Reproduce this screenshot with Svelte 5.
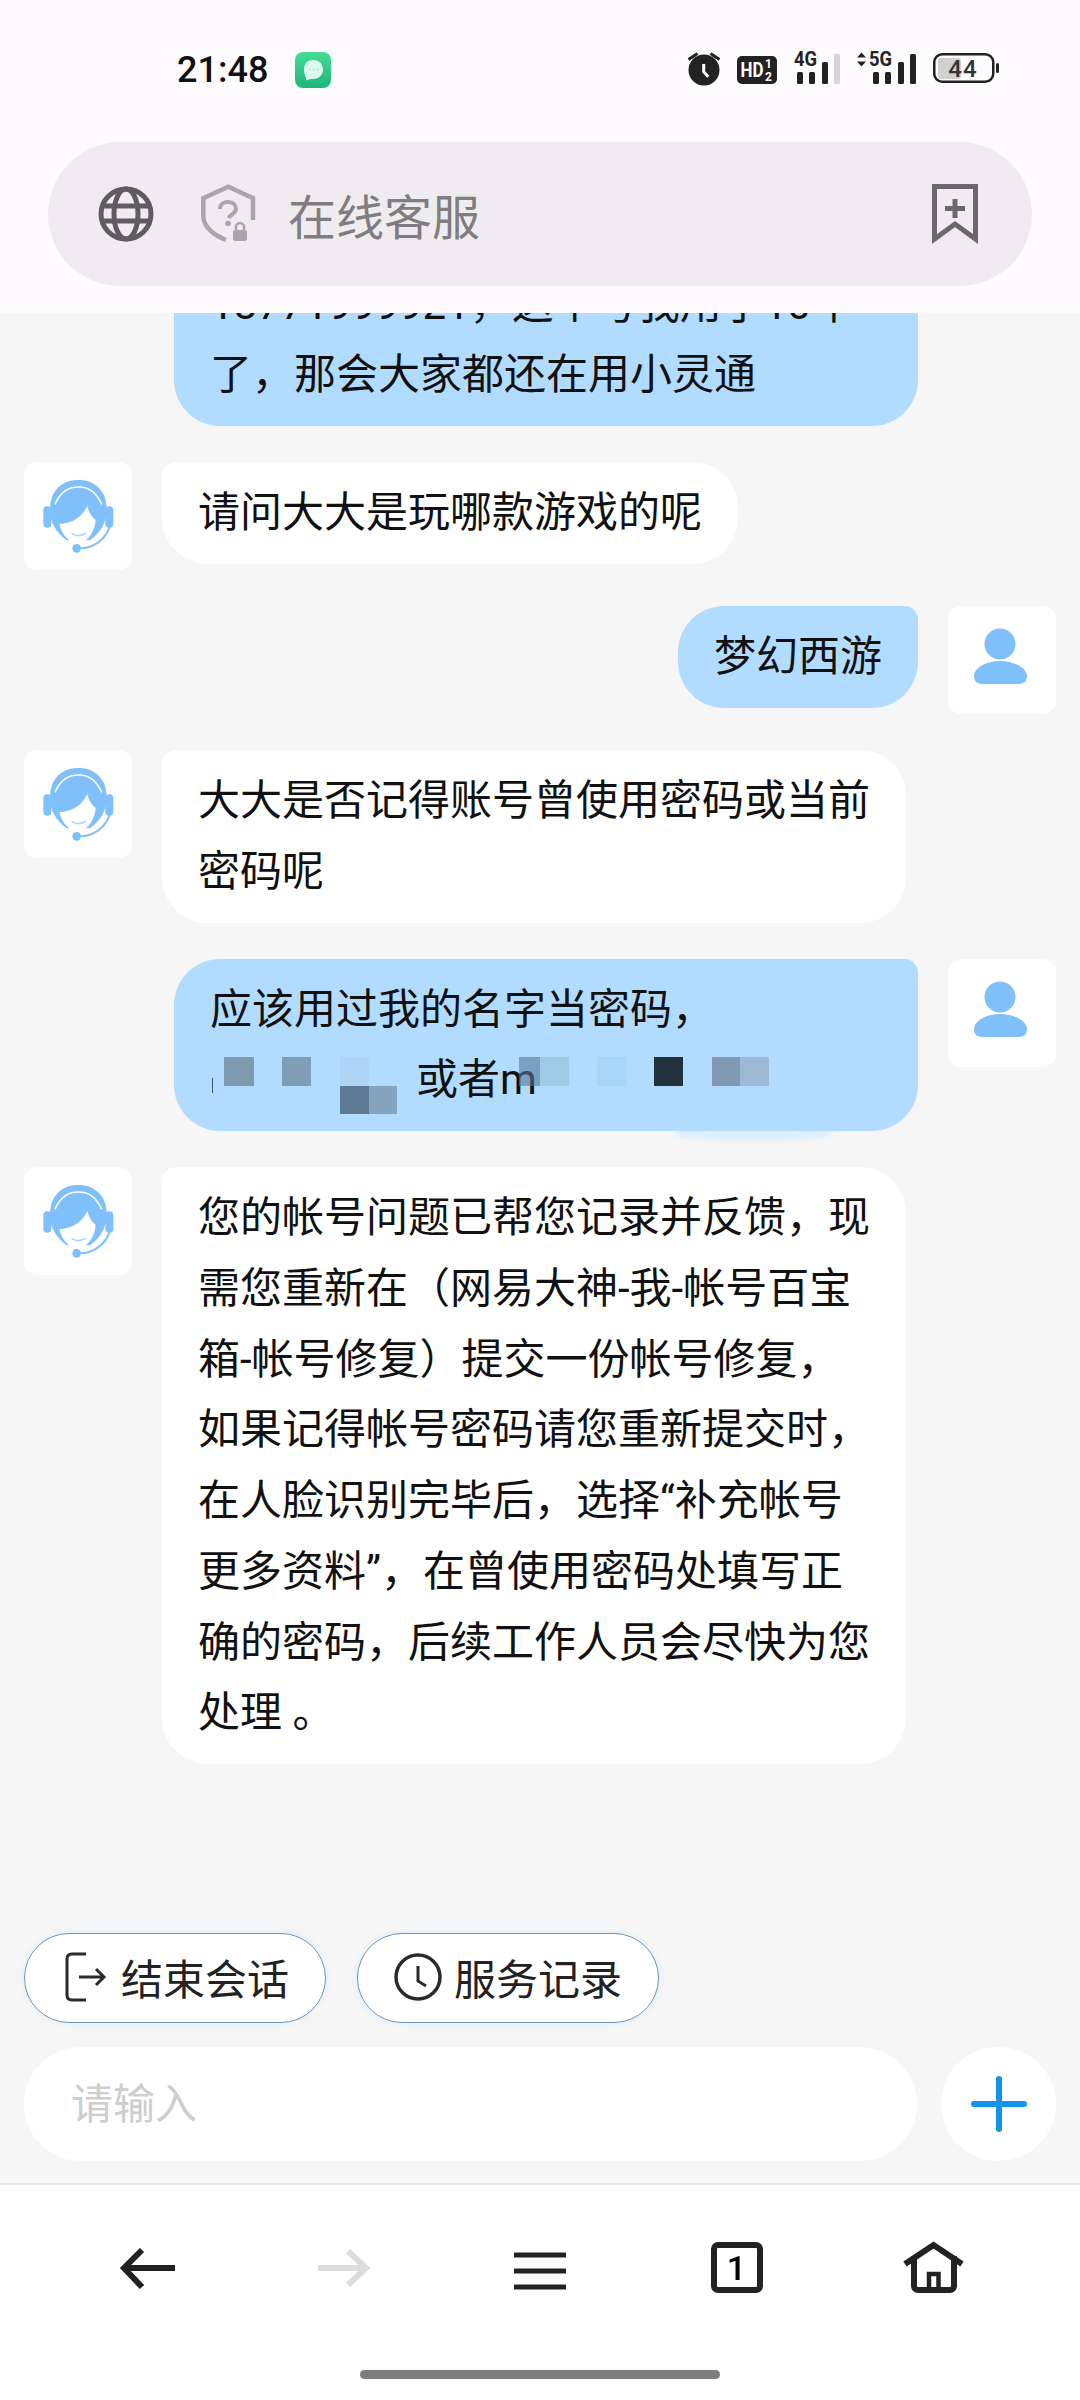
<script>
  const bars = [
    { x: 0, top: 22 },
    { x: 12, top: 22 },
    { x: 25, top: 12 },
    { x: 37, top: 4 }
  ];

  const messages = [
    {
      from: 'me',
      wide: true,
      scrolled: true,
      text: '18771999921，这个号我用了10年了，那会大家都还在用小灵通'
    },
    { from: 'agent', text: '请问大大是玩哪款游戏的呢' },
    { from: 'me', text: '梦幻西游' },
    { from: 'agent', wide: true, text: '大大是否记得账号曾使用密码或当前密码呢' },
    {
      from: 'me',
      wide: true,
      text: '应该用过我的名字当密码，',
      tail: '或者m',
      masks: [
        { x: 38, y: 119, w: 1, h: 15, c: '#44586a' },
        { x: 50, y: 98, w: 30, h: 29, c: '#7e9ab1' },
        { x: 108, y: 98, w: 29, h: 29, c: '#7f9db3' },
        { x: 166, y: 98, w: 29, h: 29, c: '#aed5f6' },
        { x: 166, y: 127, w: 29, h: 28, c: '#5f7a93' },
        { x: 195, y: 127, w: 28, h: 28, c: '#86a4bd' },
        { x: 345, y: 98, w: 21, h: 29, c: 'rgba(84, 120, 146, 0.6)' },
        { x: 366, y: 98, w: 29, h: 29, c: '#a0cbe6' },
        { x: 423, y: 98, w: 29, h: 29, c: '#a8d6f8' },
        { x: 480, y: 98, w: 29, h: 29, c: '#22313b' },
        { x: 538, y: 98, w: 28, h: 29, c: '#8299b3' },
        { x: 566, y: 98, w: 29, h: 29, c: '#9cbad6' }
      ],
      smudge: true
    },
    {
      from: 'agent',
      wide: true,
      text: '您的帐号问题已帮您记录并反馈，现需您重新在（网易大神-我-帐号百宝箱-帐号修复）提交一份帐号修复，如果记得帐号密码请您重新提交时，在人脸识别完毕后，选择“补充帐号更多资料”，在曾使用密码处填写正确的密码，后续工作人员会尽快为您处理 。'
    }
  ];
</script>

{#snippet signal(lastColor)}
  {#each bars as bar, i}
    <rect
      x={bar.x}
      y={bar.top}
      width="6"
      height={34 - bar.top}
      rx="1.5"
      fill={i === 3 ? lastColor : '#222'}
    />
  {/each}
{/snippet}

{#snippet agentAvatar()}
  <div class="avatar">
    <svg viewBox="0 0 108 108" width="108" height="108">
      <g transform="translate(6 7) scale(.3333)" fill="#7fbffa">
        <path d="M60 122C60 65 95 33 145 33C195 33 230 65 230 122C230 160 212 190 180 214H110C78 190 60 160 60 122Z" />
        <rect x="40" y="112" width="24" height="64" rx="12" />
        <rect x="226" y="112" width="24" height="64" rx="12" />
        <path d="M75 106C90 70 115 54 145 54C175 54 200 70 215 106" fill="none" stroke="#fff" stroke-width="5" />
        <path d="M88 165C110 165 152 155 172 110C176 132 188 146 197 152C196 185 172 222 145 222C115 222 95 195 88 165Z" fill="#fff" />
        <path d="M125 193Q145 207 167 193" fill="none" stroke="#a6d4fc" stroke-width="5" />
        <path d="M150 238C185 238 225 215 238 175" fill="none" stroke="#7fbffa" stroke-width="6" />
        <circle cx="140" cy="238" r="13" />
      </g>
    </svg>
  </div>
{/snippet}

{#snippet userAvatar()}
  <div class="avatar">
    <svg viewBox="0 0 108 108" width="108" height="108" fill="#7fbffa">
      <circle cx="52" cy="38" r="15.5" />
      <path d="M26 70C26 62 38 55 52 55C66 55 79 62 79 70C79 76 75 78 70 78H35C30 78 26 76 26 70Z" />
    </svg>
  </div>
{/snippet}

<div class="page">
  <header class="top">
    <div class="status">
      <span class="time">21:48</span>
      <svg class="notif" viewBox="0 0 36 36" width="36" height="36">
        <defs>
          <linearGradient id="msg-green" x1="0" y1="0" x2="0" y2="1">
            <stop offset="0" stop-color="#45dd94" />
            <stop offset="1" stop-color="#1fb57c" />
          </linearGradient>
        </defs>
        <rect width="36" height="36" rx="8" fill="url(#msg-green)" />
        <path d="M18 8C24 8 28 12 28 17.5C28 23 24 27 18 27C16 27 14 27 11 28.5C12 26 9 23 9 17.5C9 12 12 8 18 8Z" fill="#dcf9ee" />
        <circle cx="14.5" cy="17.5" r="1" fill="#a9e6cf" />
        <circle cx="18.5" cy="17.5" r="1" fill="#a9e6cf" />
        <circle cx="22.5" cy="17.5" r="1" fill="#a9e6cf" />
      </svg>
      <div class="status-icons">
        <svg width="32" height="40" viewBox="0 0 32 40">
          <path d="M.5 9.5L9.5 3.5M31.5 9.5L22.5 3.5" stroke="#222" stroke-width="3" fill="none" />
          <circle cx="16" cy="20" r="15.5" fill="#222" />
          <path d="M15.7 14V21.7L20.3 26.7" stroke="#fff" stroke-width="3" fill="none" />
        </svg>
        <svg width="40" height="40" viewBox="0 0 40 40">
          <rect y="6" width="40" height="28" rx="5" fill="#222" />
          <text class="st-bold" x="3.5" y="27" font-size="20" textLength="23" lengthAdjust="spacingAndGlyphs" fill="#fff">HD</text>
          <text class="st-bold" x="28" y="18" font-size="12" fill="#fff">1</text>
          <text class="st-bold" x="28" y="31" font-size="12" fill="#fff">2</text>
        </svg>
        <svg width="46" height="40" viewBox="0 0 46 40">
          <text class="st-bold" x="0" y="16" font-size="20" textLength="23" lengthAdjust="spacingAndGlyphs" fill="#222">4G</text>
          <g transform="translate(3 0)">{@render signal('#d6d4d6')}</g>
        </svg>
        <svg width="59" height="40" viewBox="0 0 59 40">
          <path d="M0 7.5L4.5 2.5L9 7.5ZM0 11.5L4.5 16.5L9 11.5Z" fill="#222" />
          <text class="st-bold" x="12" y="16" font-size="20" textLength="23" lengthAdjust="spacingAndGlyphs" fill="#222">5G</text>
          <g transform="translate(16 0)">{@render signal('#222')}</g>
        </svg>
        <svg width="66" height="40" viewBox="0 0 66 40">
          <rect x="1.25" y="4.25" width="59" height="27.5" rx="8" fill="none" stroke="#222" stroke-width="2.5" />
          <rect x="5" y="8" width="23" height="21" rx="3" fill="#d0d0d0" />
          <text class="st-num" x="30" y="27" font-size="24" text-anchor="middle" fill="#333">44</text>
          <rect x="63" y="13" width="3" height="10" rx="1.5" fill="#222" />
        </svg>
      </div>
    </div>

    <div class="address">
      <svg width="56" height="56" viewBox="0 0 56 56" fill="none" stroke="#5f5b5f" stroke-width="5">
        <circle cx="28" cy="28" r="25" />
        <ellipse cx="28" cy="28" rx="12" ry="25" />
        <path d="M4 20H52M4 35H52" />
      </svg>
      <svg class="shield" width="56" height="60" viewBox="0 0 56 60">
        <path d="M53 36V14.3L28.3 2.7L3.3 14.3V32C3.3 44 16 52 26 56" fill="none" stroke="#a8a6a8" stroke-width="4.5" />
        <path d="M20 25C20 20 24 18 28 18C33 18 36 21 36 25C36 29 31 30 28.6 34" fill="none" stroke="#a8a6a8" stroke-width="4" />
        <circle cx="28" cy="39.5" r="2.8" fill="#a8a6a8" />
        <rect x="33" y="46" width="14" height="11" rx="2" fill="#a8a6a8" />
        <path d="M36 47V43A4 4 0 0 1 44 43V47" fill="none" stroke="#a8a6a8" stroke-width="2.5" />
      </svg>
      <span class="title">在线客服</span>
      <svg class="bookmark" width="46" height="60" viewBox="0 0 46 60" fill="none" stroke="#6b676b" stroke-width="5">
        <path d="M2.5 2.5H43.5V55L23 40L2.5 55Z" />
        <path d="M13 24.5H33M23 15V34" />
      </svg>
    </div>
  </header>

  <main class="chat">
    <div class="messages">
      {#each messages as msg}
        <div class="row {msg.from}">
          {#if msg.from === 'agent'}
            {@render agentAvatar()}
          {/if}
          <div class="bubble" class:wide={msg.wide} class:scrolled={msg.scrolled}>
            {msg.text}
            {#if msg.tail}
              <span class="tail">{msg.tail}</span>
            {/if}
            {#if msg.masks}
              {#each msg.masks as m}
                <i class="mask" style="left:{m.x}px;top:{m.y}px;width:{m.w}px;height:{m.h}px;background:{m.c}"></i>
              {/each}
            {/if}
            {#if msg.smudge}
              <i class="smudge"></i>
            {/if}
          </div>
          {#if msg.from === 'me'}
            {@render userAvatar()}
          {/if}
        </div>
      {/each}
    </div>

    <div class="actions">
      <button class="action">
        <svg width="48" height="52" viewBox="0 0 48 52" fill="none" stroke="#2a2a2a" stroke-width="3">
          <path d="M25 3H11Q6 3 6 8V44Q6 49 11 49H25" />
          <path d="M18 26H43M35 18L43 26L35 34" />
        </svg>
        结束会话
      </button>
      <button class="action">
        <svg width="48" height="52" viewBox="0 0 48 52" fill="none" stroke="#2a2a2a" stroke-width="3.5">
          <circle cx="24" cy="26" r="22" />
          <path d="M24 15V30L32 35" stroke-width="3" />
        </svg>
        服务记录
      </button>
    </div>

    <div class="composer">
      <input class="input" placeholder="请输入" />
      <button class="plus" aria-label="更多">
        <svg width="58" height="58" viewBox="0 0 58 58" stroke="#1493ea" stroke-width="6" stroke-linecap="round">
          <path d="M29 4V54M4 29H54" />
        </svg>
      </button>
    </div>
  </main>

  <footer class="nav">
    <div class="nav-icons">
      <svg width="64" height="64" viewBox="0 0 64 64" fill="none" stroke="#222" stroke-width="6">
        <path d="M26 14L8 32L26 51M8 32H59" />
      </svg>
      <svg width="64" height="64" viewBox="0 0 64 64" fill="none" stroke="#dedcde" stroke-width="6">
        <path d="M36 15L54 32L36 49M6 32H54" />
      </svg>
      <svg width="64" height="64" viewBox="0 0 64 64" fill="none" stroke="#222" stroke-width="5">
        <path d="M6 19H58M6 35H58M6 51H58" />
      </svg>
      <svg width="64" height="64" viewBox="0 0 64 64">
        <rect x="10" y="9" width="46" height="45" rx="4" fill="none" stroke="#222" stroke-width="6" />
        <text class="st-num" x="33" y="44" font-size="34" font-weight="700" text-anchor="middle" fill="#000">1</text>
      </svg>
      <svg width="64" height="64" viewBox="0 0 64 64" fill="none" stroke="#222" stroke-width="6">
        <path d="M5 28L33.5 9L62 28" />
        <path d="M14 20V50A4 4 0 0 0 18 54H50A4 4 0 0 0 54 50V20" />
        <path d="M29 54V38H38.5V54" stroke-width="4.5" />
      </svg>
    </div>
    <div class="home-bar"></div>
  </footer>
</div>

<style>
  :global(body) {
    margin: 0;
    background: #f6f6f6;
  }

  .page {
    display: flex;
    flex-direction: column;
    height: 2400px;
    font-family: "Noto Sans CJK SC", "Noto Sans", sans-serif;
    color: #111;
  }

  .top {
    flex: none;
    height: 313px;
    box-sizing: border-box;
    padding-top: 50px;
    background: #fefbfe;
  }

  .status {
    display: flex;
    align-items: center;
    height: 40px;
    padding: 0 81px 0 177px;
  }

  .time {
    font-family: Roboto, sans-serif;
    font-size: 36px;
    font-weight: 500;
    color: #111;
  }

  .notif {
    margin-left: 27px;
  }

  .status-icons {
    display: flex;
    gap: 17px;
    margin-left: auto;
  }

  .status-icons svg {
    overflow: visible;
  }

  .st-bold {
    font-family: Roboto, sans-serif;
    font-weight: 700;
  }

  .st-num {
    font-family: Roboto, sans-serif;
    font-weight: 500;
    letter-spacing: 1px;
  }

  .address {
    display: flex;
    align-items: center;
    height: 144px;
    margin: 52px 48px 0;
    padding: 0 54px 0 50px;
    background: #efecef;
    border-radius: 72px;
  }

  .shield {
    margin-left: 46px;
  }

  .title {
    margin-left: 32px;
    font-size: 48px;
    color: #807c80;
  }

  .bookmark {
    margin-left: auto;
  }

  .chat {
    flex: 1;
    display: flex;
    flex-direction: column;
    min-height: 0;
    background: #f6f6f6;
  }

  .messages {
    flex: none;
    height: 1620px;
    box-sizing: border-box;
    padding-bottom: 169px;
    display: flex;
    flex-direction: column;
    justify-content: flex-end;
    gap: 36px;
    overflow: hidden;
    isolation: isolate;
  }

  .row {
    flex: none;
    display: flex;
    align-items: flex-start;
    gap: 30px;
    padding: 0 24px;
  }

  .row.me {
    justify-content: flex-end;
  }

  .avatar {
    flex: none;
    width: 108px;
    height: 108px;
    background: #fff;
    border-radius: 14px;
  }

  .avatar svg {
    display: block;
  }

  .bubble {
    position: relative;
    box-sizing: border-box;
    max-width: 744px;
    padding: 16px 36px 15px;
    font-family: Roboto, "Noto Sans CJK SC", sans-serif;
    font-size: 42px;
    line-height: 70.75px;
    background: #fff;
    border-radius: 14px 46px 46px 46px;
  }

  .bubble.wide {
    width: 744px;
  }

  /* older lines of this message have scrolled away under the header */
  .bubble.scrolled {
    padding-top: 87px;
  }

  .me .bubble {
    background: #b2dcff;
    border-radius: 46px 14px 46px 46px;
  }

  .tail {
    display: block;
    padding-left: 206px;
  }

  .mask {
    position: absolute;
  }

  .smudge {
    position: absolute;
    left: 502px;
    top: 168px;
    width: 154px;
    height: 14px;
    background: #dbedfc;
    border-radius: 0 0 50% 50%;
    filter: blur(2px);
    z-index: -1;
  }

  .actions {
    flex: none;
    display: flex;
    gap: 31px;
    padding: 0 24px;
  }

  .action {
    display: flex;
    align-items: center;
    justify-content: center;
    gap: 12px;
    width: 302px;
    height: 90px;
    padding: 0 0 3px;
    background: #fff;
    border: 1px solid #6b97bd;
    border-radius: 45px;
    box-shadow: 0 0 6px rgba(200, 225, 250, 0.5);
    font-family: inherit;
    font-size: 42px;
    color: #222;
  }

  .composer {
    flex: none;
    display: flex;
    gap: 24px;
    margin-top: 24px;
    padding: 0 24px;
  }

  .input {
    flex: 1;
    min-width: 0;
    height: 114px;
    box-sizing: border-box;
    padding: 0 47px 8px;
    background: #fff;
    border: none;
    border-radius: 57px;
    outline: none;
    font-family: inherit;
    font-size: 42px;
  }

  .input::placeholder {
    color: #cdcdcd;
  }

  .plus {
    flex: none;
    display: flex;
    align-items: center;
    justify-content: center;
    width: 115px;
    height: 114px;
    padding: 0;
    background: #fff;
    border: none;
    border-radius: 50%;
  }

  .nav {
    flex: none;
    height: 217px;
    box-sizing: border-box;
    padding-top: 51px;
    background: #fff;
    border-top: 2px solid #e8e8e8;
  }

  .nav-icons {
    display: grid;
    grid-template-columns: repeat(5, 196px);
    justify-items: center;
    padding-left: 50px;
  }

  .home-bar {
    width: 360px;
    height: 9px;
    margin: 70px auto 0;
    background: #7d7d7d;
    border-radius: 5px;
  }
</style>
